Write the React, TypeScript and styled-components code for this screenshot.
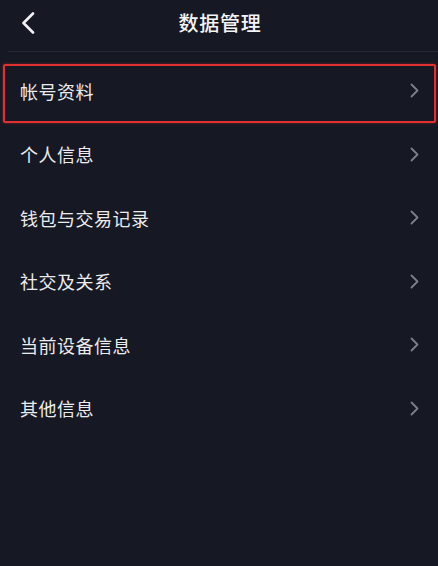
import React from "react"
import styled, { createGlobalStyle } from "styled-components"

const GlobalStyle = createGlobalStyle`
  html, body {
    margin: 0;
    padding: 0;
    background: #161823;
  }
  body {
    font-family: "Noto Sans CJK SC", "Noto Sans", sans-serif;
  }
`

const items = [
  "帐号资料",
  "个人信息",
  "钱包与交易记录",
  "社交及关系",
  "当前设备信息",
  "其他信息"
]

const App: React.FC = () => (
  <>
    <GlobalStyle />
    <Page>
      <Header>
        <BackButton aria-label="返回">
          <svg width="14" height="22" viewBox="0 0 14 22" fill="none">
            <path
              d="M12 1.5L2.5 11L12 20.5"
              stroke="#f2f2f4"
              strokeWidth="2.6"
              strokeLinecap="round"
              strokeLinejoin="round"
            />
          </svg>
        </BackButton>
        <Title>数据管理</Title>
      </Header>
      <List>
        {items.map((label, i) => (
          <Row key={label} highlighted={i === 0}>
            <Label>{label}</Label>
            <Chevron width="9" height="15" viewBox="0 0 9 15" fill="none">
              <path
                d="M1.5 1.5L7.5 7.5L1.5 13.5"
                stroke="#7c7e88"
                strokeWidth="1.8"
                strokeLinecap="round"
                strokeLinejoin="round"
              />
            </Chevron>
          </Row>
        ))}
      </List>
    </Page>
  </>
)

const Page = styled.div`
  width: 438px;
  height: 566px;
  background: #161823;
  overflow: hidden;
`

const Header = styled.div`
  position: relative;
  height: 51px;
  display: flex;
  align-items: center;
  justify-content: center;
  margin-left: 8px;
  border-bottom: 1px solid #262834;
`

const BackButton = styled.div`
  position: absolute;
  left: 13px;
  top: 12px;
  display: flex;
`

const Title = styled.div`
  margin-left: -6px;
  margin-top: -6px;
  color: #f4f4f6;
  font-size: 20px;
  font-weight: 500;
  letter-spacing: 0.8px;
`

const List = styled.div`
  padding-top: 7px;
  display: flex;
  flex-direction: column;
`

const Row = styled.div<{ highlighted?: boolean }>`
  position: relative;
  height: 63.5px;
  display: flex;
  align-items: center;
  justify-content: space-between;
  padding: 0 19px 0 20px;
  box-sizing: border-box;

  ${({ highlighted }) =>
    highlighted &&
    `
    &::after {
      content: "";
      position: absolute;
      left: 3px;
      right: 2px;
      top: 5px;
      bottom: 0;
      border: 2.5px solid #e0302f;
      border-radius: 2px;
      box-shadow: 0 0 3px rgba(224, 48, 47, 0.5);
    }
  `}
`

const Label = styled.span`
  color: #ececef;
  font-size: 18px;
  letter-spacing: 0.5px;
`

const Chevron = styled.svg`
  display: block;
`

export default App
